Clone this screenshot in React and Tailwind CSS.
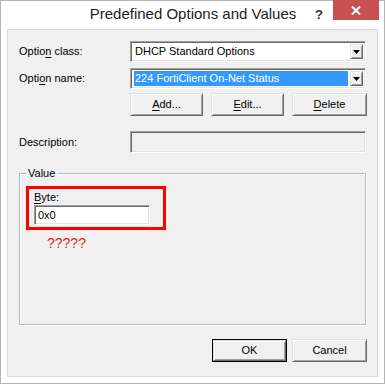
import React from 'react';

const sunken =
  'border border-t-[#a0a0a0] border-l-[#a0a0a0] border-r-white border-b-white shadow-[inset_1px_1px_0_#696969,inset_-1px_-1px_0_#e3e3e3]';
const raised =
  'border border-t-[#e3e3e3] border-l-[#e3e3e3] border-r-[#696969] border-b-[#696969] shadow-[inset_1px_1px_0_#ffffff,inset_-1px_-1px_0_#a0a0a0]';

function Mn({ children }) {
  return <span className="underline underline-offset-[2px]">{children}</span>;
}

function Combo({ text, selected }) {
  return (
    <div className={`w-[236px] h-[21px] bg-white flex items-stretch p-[2px] ${sunken}`}>
      <div className="flex-1 flex items-center pl-[1px]">
        <div
          className={`h-full flex-1 flex items-center pl-[1px] ${
            selected ? 'bg-[#3399ff] text-white' : 'text-black'
          }`}
        >
          {text}
        </div>
      </div>
      <div className={`w-[13px] ml-[2px] bg-[#f0f0f0] flex items-center justify-center ${raised}`}>
        <svg width="7" height="4" viewBox="0 0 7 4">
          <path d="M0 0h7L3.5 4z" fill="#000" />
        </svg>
      </div>
    </div>
  );
}

function Btn({ children, w = 'w-[73px]', isDefault }) {
  return (
    <div
      className={`${w} h-[23px] ${
        isDefault ? 'border border-[#000] p-0' : ''
      } flex`}
    >
      <div className={`flex-1 bg-[#f0f0f0] flex items-center justify-center ${raised}`}>
        {children}
      </div>
    </div>
  );
}

export default function App() {
  return (
    <div
      className="w-[385px] h-[384px] border border-[#b4b4b4] bg-white flex flex-col text-[11px] text-black"
      style={{ fontFamily: '"Liberation Sans", Arial, sans-serif' }}
    >
      {/* title bar */}
      <div className="h-[28px] flex pr-[5px] pl-[6px] relative">
        <div className="flex-1 flex items-center justify-center pl-[46px] pb-[2px] text-[15px] text-[#222]">
          Predefined Options and Values
        </div>
        <div className="absolute right-[61px] top-[4px] font-bold text-[13px] text-[#333]">?</div>
        <div className="w-[46px] h-[20px] -mt-[1px] bg-[#c75050] flex items-center justify-center">
          <svg width="10" height="9" viewBox="0 0 10 9">
            <path d="M1 0.5l8 8M9 0.5l-8 8" stroke="#fff" strokeWidth="2" />
          </svg>
        </div>
      </div>

      {/* client area */}
      <div className="mx-[6px] h-[348px] border border-[#dadada] bg-[#f0f0f0] flex flex-col">
        <div className="flex items-center mt-[11px]">
          <div className="w-[122px] pl-[11px]">
            Optio<Mn>n</Mn> class:
          </div>
          <Combo text="DHCP Standard Options" />
        </div>
        <div className="flex items-center mt-[6px]">
          <div className="w-[122px] pl-[11px]">
            Opti<Mn>o</Mn>n name:
          </div>
          <Combo text="224 FortiClient On-Net Status" selected />
        </div>
        <div className="flex gap-[8px] mt-[4px] ml-[122px]">
          <Btn>
            <span>
              <Mn>A</Mn>dd...
            </span>
          </Btn>
          <Btn>
            <span>
              <Mn>E</Mn>dit...
            </span>
          </Btn>
          <Btn w="w-[75px]">
            <span>
              <Mn>D</Mn>elete
            </span>
          </Btn>
        </div>
        <div className="flex items-center mt-[15px]">
          <div className="w-[122px] pl-[11px]">Description:</div>
          <div className={`w-[236px] h-[22px] bg-[#f0f0f0] ${sunken}`} />
        </div>

        {/* Value group */}
        <div className="ml-[11px] mt-[20px] w-[347px] h-[152px] border border-[#b9b9b9] shadow-[1px_1px_0_#ffffff,inset_1px_1px_0_#ffffff] flex flex-col">
          <div className="-mt-[7px] h-[13px] leading-[13px] ml-[6px] px-[2px] bg-[#f0f0f0] self-start">
            Value
          </div>
          <div className="ml-[6px] mt-[6px] w-[140px] h-[44px] border-[3px] border-[#ff0000] flex flex-col pl-[5px]">
            <div className="h-[15px] leading-[15px] mt-[1px]">
              <Mn>B</Mn>yte:
            </div>
            <div className={`w-[116px] h-[20px] bg-white flex items-center pl-[3px] ${sunken}`}>0x0</div>
          </div>
          <div className="ml-[27px] mt-[5px] text-[14px] leading-[16px] text-[#e8272b]">?????</div>
        </div>

        <div className="flex justify-end gap-[5px] mt-[14px] mr-[10px]">
          <Btn w="w-[75px]" isDefault>
            OK
          </Btn>
          <Btn w="w-[75px]">Cancel</Btn>
        </div>
      </div>
    </div>
  );
}
